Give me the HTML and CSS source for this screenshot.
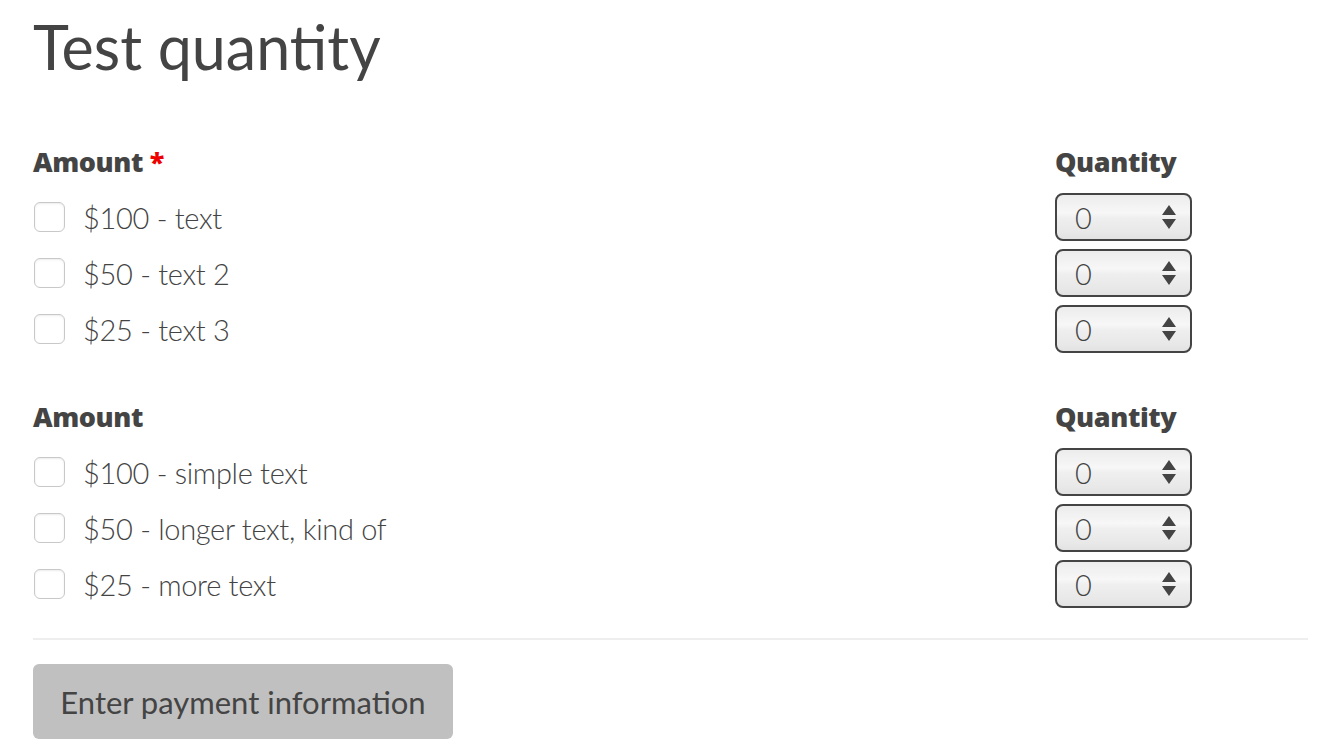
FILE: index.html
```html
<!DOCTYPE html>
<html lang="en">
<head>
    <meta charset="UTF-8">
    <meta name="viewport" content="width=device-width, initial-scale=1.0">
    <title>Test quantity</title>
    <link rel="stylesheet" href="styles.css">
</head>
<body>
    <div class="page">
        <h1 class="title">Test quantity</h1>

        <div class="group">
            <div class="group-head">
                <span class="label">Amount <span class="required">*</span></span>
                <span class="label">Quantity</span>
            </div>
            <div class="row">
                <label class="option"><input type="checkbox"> $100 - text</label>
                <div class="qty">
                    <select><option>0</option><option>1</option><option>2</option></select>
                    <svg class="arrows" width="16" height="26" viewBox="0 0 16 26"><path d="M8 1 L15 11 H1 Z M1 15 H15 L8 25 Z" fill="#444"/></svg>
                </div>
            </div>
            <div class="row">
                <label class="option"><input type="checkbox"> $50 - text 2</label>
                <div class="qty">
                    <select><option>0</option><option>1</option><option>2</option></select>
                    <svg class="arrows" width="16" height="26" viewBox="0 0 16 26"><path d="M8 1 L15 11 H1 Z M1 15 H15 L8 25 Z" fill="#444"/></svg>
                </div>
            </div>
            <div class="row">
                <label class="option"><input type="checkbox"> $25 - text 3</label>
                <div class="qty">
                    <select><option>0</option><option>1</option><option>2</option></select>
                    <svg class="arrows" width="16" height="26" viewBox="0 0 16 26"><path d="M8 1 L15 11 H1 Z M1 15 H15 L8 25 Z" fill="#444"/></svg>
                </div>
            </div>
        </div>

        <div class="group">
            <div class="group-head">
                <span class="label">Amount</span>
                <span class="label">Quantity</span>
            </div>
            <div class="row">
                <label class="option"><input type="checkbox"> $100 - simple text</label>
                <div class="qty">
                    <select><option>0</option><option>1</option><option>2</option></select>
                    <svg class="arrows" width="16" height="26" viewBox="0 0 16 26"><path d="M8 1 L15 11 H1 Z M1 15 H15 L8 25 Z" fill="#444"/></svg>
                </div>
            </div>
            <div class="row">
                <label class="option"><input type="checkbox"> $50 - longer text, kind of</label>
                <div class="qty">
                    <select><option>0</option><option>1</option><option>2</option></select>
                    <svg class="arrows" width="16" height="26" viewBox="0 0 16 26"><path d="M8 1 L15 11 H1 Z M1 15 H15 L8 25 Z" fill="#444"/></svg>
                </div>
            </div>
            <div class="row">
                <label class="option"><input type="checkbox"> $25 - more text</label>
                <div class="qty">
                    <select><option>0</option><option>1</option><option>2</option></select>
                    <svg class="arrows" width="16" height="26" viewBox="0 0 16 26"><path d="M8 1 L15 11 H1 Z M1 15 H15 L8 25 Z" fill="#444"/></svg>
                </div>
            </div>
        </div>

        <div class="actions">
            <button class="pay-button" disabled>Enter payment information</button>
        </div>
    </div>
</body>
</html>
```

FILE: styles.css
```css
body {
    margin: 0;
    font-family: Lato, "Open Sans", sans-serif;
    color: #444;
    background-color: #fff;
}
.page {
    padding: 0 26px 0 33px;
}
.title {
    margin: 0;
    padding-top: 12px;
    font-size: 61px;
    font-weight: 400;
    line-height: 70px;
}
.group {
    margin-top: 62px;
}
.group + .group {
    margin-top: 46px;
}
.group-head {
    display: grid;
    grid-template-columns: 1fr 253px;
    margin-bottom: 13px;
}
.label {
    font-family: "Open Sans", Lato, sans-serif;
    font-size: 27px;
    font-weight: 800;
    line-height: 36px;
    letter-spacing: -0.4px;
}
.required {
    color: #e00;
}
.row {
    display: grid;
    grid-template-columns: 1fr 253px;
    align-items: center;
    margin-bottom: 8px;
}
.option {
    display: flex;
    align-items: center;
    gap: 18px;
    font-size: 29px;
    font-weight: 300;
    letter-spacing: -0.3px;
}
.option input {
    appearance: none;
    -webkit-appearance: none;
    margin: 0 0 0 1px;
    width: 31px;
    height: 30px;
    border: 1px solid #c8c8c8;
    border-radius: 6px;
    background-color: #fff;
    box-shadow: inset 0 1px 2px rgba(0, 0, 0, 0.08);
}
.qty {
    position: relative;
    width: 137px;
    height: 48px;
}
.qty select {
    appearance: none;
    -webkit-appearance: none;
    width: 100%;
    height: 100%;
    margin: 0;
    padding: 0 0 0 18px;
    border: 2px solid #444;
    border-radius: 8px;
    background: linear-gradient(to bottom, #ececec, #f7f7f7 40%, #efefef 52%, #e8e8e8 85%, #e2e2e2);
    font-family: Lato, "Open Sans", sans-serif;
    font-size: 29px;
    font-weight: 300;
    color: #444;
}
.qty .arrows {
    position: absolute;
    right: 15px;
    top: 11px;
    pointer-events: none;
}
.actions {
    margin-top: 30px;
    border-top: 2px solid #eee;
    padding-top: 24px;
}
.pay-button {
    width: 420px;
    height: 75px;
    border: none;
    border-radius: 6px;
    background-color: #c0c0c0;
    font-family: Lato, "Open Sans", sans-serif;
    font-size: 31px;
    color: #444;
}
```
